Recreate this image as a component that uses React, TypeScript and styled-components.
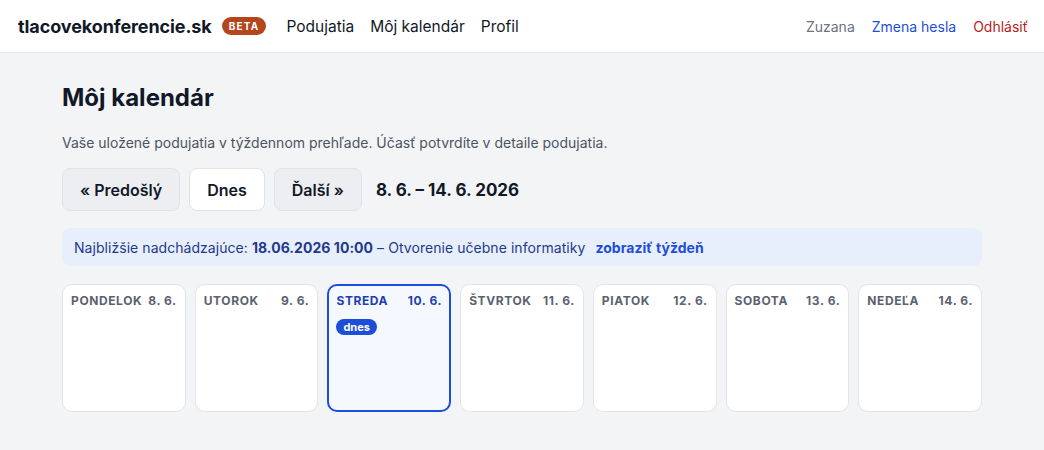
import React from 'react';
import styled, { createGlobalStyle } from 'styled-components';

const GlobalStyle = createGlobalStyle`
  html, body {
    margin: 0;
    padding: 0;
    background: #f3f4f6;
    font-family: Inter, 'Noto Sans', Arial, sans-serif;
    color: #111827;
  }
  * { box-sizing: border-box; }
`;

const Header = styled.header`
  display: flex;
  align-items: center;
  justify-content: space-between;
  height: 53px;
  padding: 0 16px 0 18px;
  background: #fff;
  border-bottom: 1px solid #e5e7eb;
`;

const Left = styled.div`
  display: flex;
  align-items: center;
`;

const Logo = styled.a`
  font-size: 18px;
  font-weight: 700;
  color: #111827;
  text-decoration: none;
  letter-spacing: -0.1px;
`;

const Beta = styled.span`
  margin-left: 10px;
  height: 18px;
  padding: 0 7px;
  display: inline-flex;
  align-items: center;
  border-radius: 9px;
  background: #b5461c;
  color: #fff;
  font-size: 10px;
  font-weight: 700;
  letter-spacing: 1.2px;
`;

const Nav = styled.nav`
  display: flex;
  gap: 16px;
  margin-left: 20px;
`;

const NavLink = styled.a`
  font-size: 15.5px;
  font-weight: 400;
  color: #111827;
  text-decoration: none;
`;

const Right = styled.div`
  display: flex;
  gap: 17px;
  font-size: 14px;
`;

const UserLink = styled.a<{ $tone: 'muted' | 'blue' | 'red' }>`
  text-decoration: none;
  color: ${(p) => (p.$tone === 'muted' ? '#6b7280' : p.$tone === 'blue' ? '#1d4ed8' : '#b91c1c')};
`;

const Main = styled.main`
  max-width: 920px;
  margin: 0 auto;
  padding-top: 28px;
`;

const Title = styled.h1`
  margin: 0;
  font-size: 24px;
  line-height: 34px;
  font-weight: 700;
  color: #111827;
`;

const Subtitle = styled.p`
  margin: 18px 0 0;
  font-size: 14px;
  line-height: 20px;
  color: #4b5563;
`;

const Toolbar = styled.div`
  display: flex;
  align-items: center;
  gap: 9px;
  margin-top: 15px;
`;

const NavButton = styled.button<{ $active?: boolean }>`
  height: 43px;
  padding: 0 17px;
  border-radius: 8px;
  border: 1px solid #dfe2e7;
  background: ${(p) => (p.$active ? '#fff' : '#eceef2')};
  font-family: inherit;
  font-size: 16px;
  font-weight: 600;
  color: #111827;
  cursor: pointer;
`;

const Range = styled.span`
  margin-left: 5px;
  font-size: 17px;
  font-weight: 700;
  color: #111827;
`;

const Notice = styled.div`
  margin-top: 17px;
  height: 38px;
  display: flex;
  align-items: center;
  padding: 0 12px;
  border-radius: 8px;
  background: #e8effc;
  font-size: 14px;
  letter-spacing: 0.05px;
  color: #1e3a8a;
`;

const NoticeLink = styled.a`
  margin-left: 10px;
  font-weight: 700;
  color: #1d4ed8;
  text-decoration: none;
`;

const Week = styled.div`
  display: grid;
  grid-template-columns: repeat(7, 1fr);
  gap: 9px;
  margin-top: 18px;
`;

const Day = styled.div<{ $today?: boolean }>`
  height: 128px;
  border-radius: 10px;
  background: ${(p) => (p.$today ? '#f6f8ff' : '#fff')};
  border: ${(p) => (p.$today ? '2px solid #1d4ed8' : '1px solid #e3e5e9')};
  padding: ${(p) => (p.$today ? '7px 7px' : '8px 8px')};
`;

const DayHead = styled.div<{ $today?: boolean }>`
  display: flex;
  justify-content: space-between;
  font-size: 12px;
  line-height: 16px;
  font-weight: 700;
  letter-spacing: 0.6px;
  text-transform: uppercase;
  color: ${(p) => (p.$today ? '#1e40af' : '#5b6270')};
`;

const TodayBadge = styled.span`
  display: inline-flex;
  align-items: center;
  margin-top: 10px;
  height: 16px;
  padding: 0 7px;
  border-radius: 8px;
  background: #1d4ed8;
  color: #fff;
  font-size: 11px;
  font-weight: 700;
`;

const days = [
  { name: 'Pondelok', date: '8. 6.' },
  { name: 'Utorok', date: '9. 6.' },
  { name: 'Streda', date: '10. 6.', today: true },
  { name: 'Štvrtok', date: '11. 6.' },
  { name: 'Piatok', date: '12. 6.' },
  { name: 'Sobota', date: '13. 6.' },
  { name: 'Nedeľa', date: '14. 6.' },
];

const App: React.FC = () => {
  return (
    <>
      <GlobalStyle />
      <Header>
        <Left>
          <Logo href="#">tlacovekonferencie.sk</Logo>
          <Beta>BETA</Beta>
          <Nav>
            <NavLink href="#">Podujatia</NavLink>
            <NavLink href="#">Môj kalendár</NavLink>
            <NavLink href="#">Profil</NavLink>
          </Nav>
        </Left>
        <Right>
          <UserLink $tone="muted" href="#">Zuzana</UserLink>
          <UserLink $tone="blue" href="#">Zmena hesla</UserLink>
          <UserLink $tone="red" href="#">Odhlásiť</UserLink>
        </Right>
      </Header>
      <Main>
        <Title>Môj kalendár</Title>
        <Subtitle>Vaše uložené podujatia v týždennom prehľade. Účasť potvrdíte v detaile podujatia.</Subtitle>
        <Toolbar>
          <NavButton>« Predošlý</NavButton>
          <NavButton $active>Dnes</NavButton>
          <NavButton>Ďalší »</NavButton>
          <Range>8. 6. – 14. 6. 2026</Range>
        </Toolbar>
        <Notice>
          Najbližšie nadchádzajúce:&nbsp;<b>18.06.2026 10:00</b>&nbsp;– Otvorenie učebne informatiky
          <NoticeLink href="#">zobraziť týždeň</NoticeLink>
        </Notice>
        <Week>
          {days.map((d) => (
            <Day key={d.name} $today={d.today}>
              <DayHead $today={d.today}>
                <span>{d.name}</span>
                <span>{d.date}</span>
              </DayHead>
              {d.today && <TodayBadge>dnes</TodayBadge>}
            </Day>
          ))}
        </Week>
      </Main>
    </>
  );
};

export default App;
